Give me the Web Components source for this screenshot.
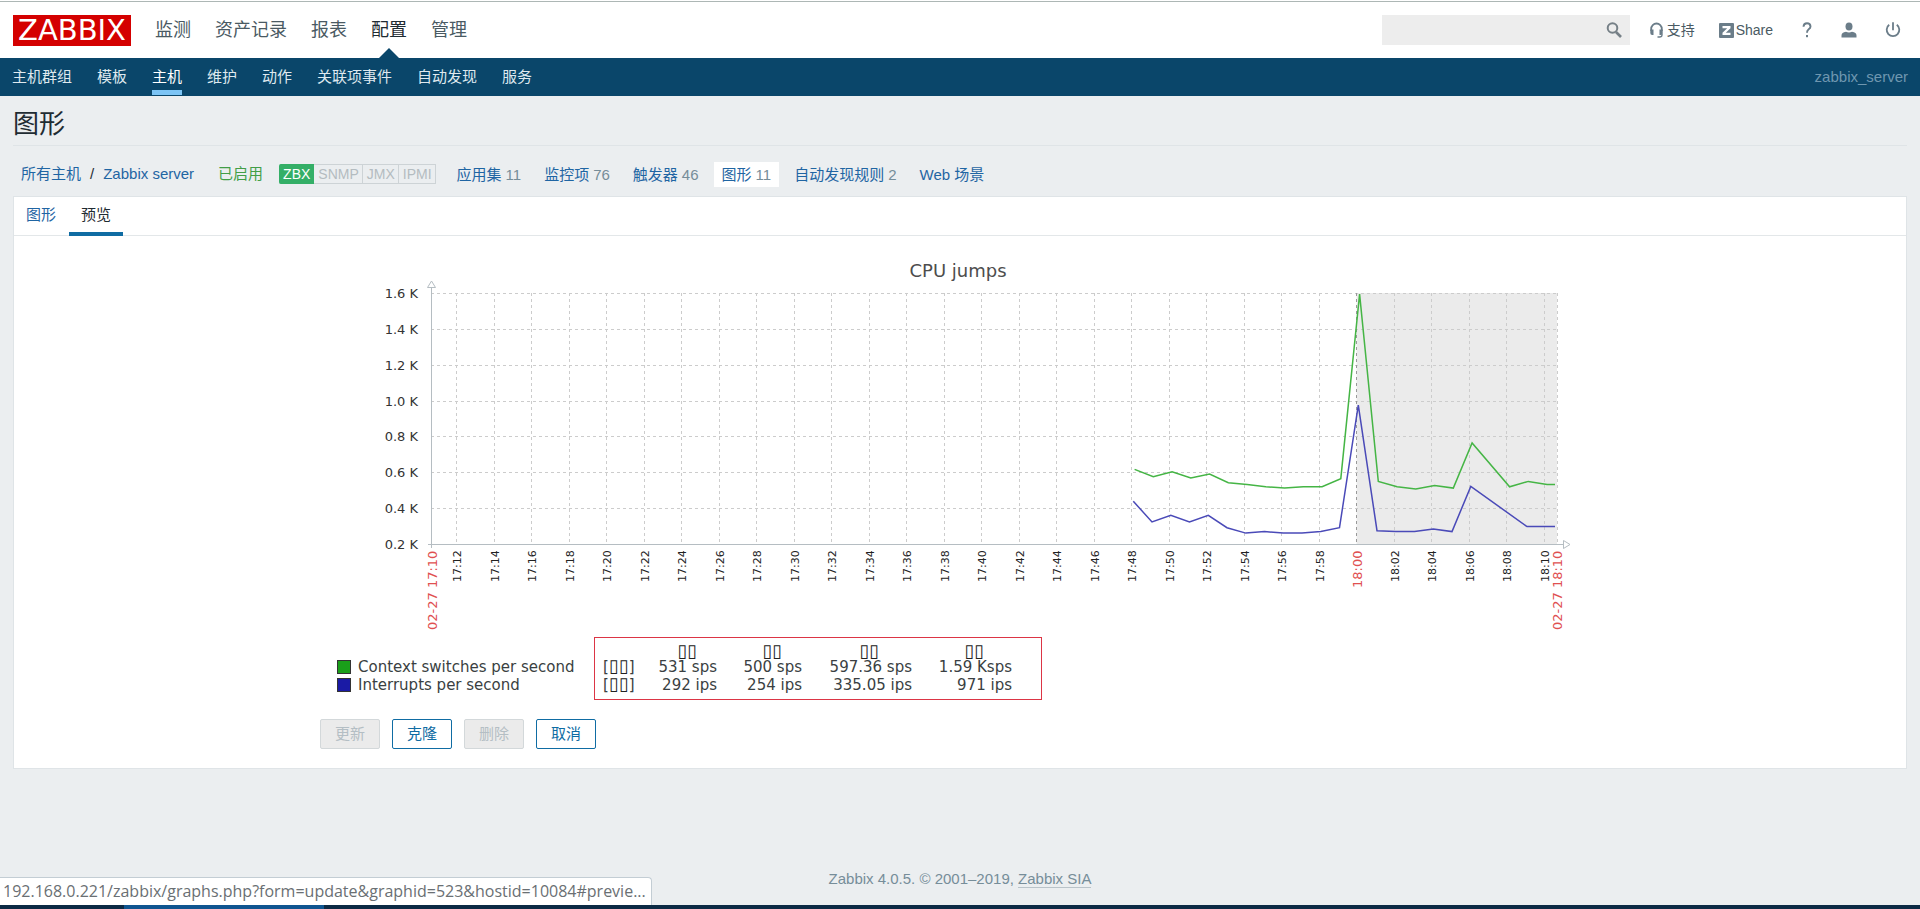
<!DOCTYPE html>
<html lang="zh-CN">
<head>
<meta charset="utf-8">
<title>Zabbix: 图形</title>
<style>
  html, body { margin: 0; }
  body {
    min-height: 100vh;
    background: #ebeef0;
    color: #1f2c33;
    font: 15px/20px "Liberation Sans", "Noto Sans CJK SC", sans-serif;
  }
</style>
</head>
<body>
<zbx-app></zbx-app>

<script>
const define = (name, html, setup) => {
  const tpl = document.createElement('template');
  tpl.innerHTML = html;
  customElements.define(name, class extends HTMLElement {
    constructor() {
      super();
      this.attachShadow({ mode: 'open' }).append(tpl.content.cloneNode(true));
    }
    connectedCallback() {
      if (setup && !this.ready) { this.ready = true; setup(this, this.shadowRoot); }
    }
  });
};

/* Top-level menu entry */
define('zbx-menu-item', `
<style>
  :host { display: flex; position: relative; height: 56px; }
  a { font-size: 18px; line-height: 56px; color: #4a5a63; text-decoration: none; }
  :host([selected]) a { color: #1f2c33; }
  :host([selected])::after {
    content: ""; position: absolute; left: 50%; bottom: 0; margin-left: -10px;
    border: 10px solid transparent; border-top: 0; border-bottom-color: #0a466a;
  }
</style>
<a href="#"><slot></slot></a>`);

define('zbx-header', `
<style>
  :host { display: flex; align-items: center; height: 56px; padding: 0 19px 0 13px; background: #fff; border-top: 1px solid #adb7b5; }
  .logo { width: 118px; height: 31px; background: #d40000; color: #fff; text-align: center; text-decoration: none;
          font: 29px/31px "DejaVu Sans", sans-serif; }
  nav { display: flex; gap: 24px; margin-left: 24px; flex: 1; }
  form { display: flex; align-items: center; width: 248px; height: 30px; background: #ededed; margin-right: 20px; }
  input { flex: 1; min-width: 0; border: 0; background: none; outline: 0; height: 30px; padding: 0 8px; box-sizing: border-box; font: inherit; }
  button { border: 0; background: none; padding: 0 8px 0 0; display: flex; }
  .tool { display: flex; align-items: center; font-size: 14px; color: #4a5a63; text-decoration: none; gap: 3px; }
  .tools { display: flex; align-items: center; height: 54px; }
  .support { margin-right: 24px; gap: 4px; }
  .share { margin-right: 28px; gap: 2px; }
  .help { margin-right: 28px; }
  .user { margin-right: 28px; }
  svg { display: block; }
</style>
<a class="logo" href="#">ZABBIX</a>
<nav><slot></slot></nav>
<div class="tools">
  <form role="search">
    <input type="text" aria-label="搜索">
    <button type="button" aria-label="搜索">
      <svg width="16" height="16" viewBox="0 0 16 16" fill="none" stroke="#768087"><circle cx="6.5" cy="6" r="4.8" stroke-width="2"/><path d="M10 10l5 5" stroke-width="2.6"/></svg>
    </button>
  </form>
  <a class="tool support" href="#">
    <svg width="13" height="16" viewBox="0 0 13 16"><path d="M1.2 9V6.8a5.3 5.3 0 0 1 10.6 0V9" fill="none" stroke="#6b7d89" stroke-width="1.8"/><path d="M.3 7.5h3.2V13H2.2Q.3 13 .3 11zM12.7 7.5H9.5V13h1.3Q12.7 13 12.7 11z" fill="#6b7d89"/><path d="M12 11.5v1.5q0 2-2.5 2H7.5" fill="none" stroke="#6b7d89" stroke-width="1.3"/></svg>支持</a>
  <a class="tool share" href="#">
    <svg width="15" height="15" viewBox="0 0 15 15"><rect width="15" height="15" rx="1" fill="#6b7d89"/><path d="M3.5 3h8v2.200L6.800 9.800h4.700V12h-8V9.800L8.200 5.200H3.500z" fill="#fff"/></svg>Share</a>
  <a class="tool help" href="#" aria-label="帮助">
    <svg width="12" height="16" viewBox="0 0 12 16"><path d="M2.5 4.7Q2.7 1.3 6 1.3T9.5 4.4Q9.5 6 7.7 7.3T6 10.8" fill="none" stroke="#6b7d89" stroke-width="1.9"/><rect x="5" y="13" width="2" height="2.2" fill="#6b7d89"/></svg></a>
  <a class="tool user" href="#" aria-label="用户">
    <svg width="16" height="16" viewBox="0 0 16 16" fill="#6b7d89"><ellipse cx="8" cy="4.5" rx="3.5" ry="4"/><path d="M.5 15.5v-2Q.5 10.500 5 9.800q3 1.300 6 0 4.500.700 4.500 3.700v2z"/></svg></a>
  <a class="tool" href="#" aria-label="退出">
    <svg width="16" height="16" viewBox="0 0 16 16" fill="none" stroke="#6b7d89" stroke-width="1.8"><path d="M4.2 2.8a6.3 6.3 0 1 0 7.6 0M8 .3v8"/></svg></a>
</div>`);

/* Second-level menu entry */
define('zbx-subitem', `
<style>
  :host { display: flex; }
  a { color: #dfe9ef; text-decoration: none; line-height: 37px; height: 32px; border-bottom: 5px solid transparent; }
  :host([selected]) a { color: #fff; border-color: #7cc4f5; }
</style>
<a href="#"><slot></slot></a>`);

define('zbx-subnav', `
<style>
  :host { display: flex; justify-content: space-between; height: 38px; padding: 0 12px; background: #0a466a; }
  nav { display: flex; gap: 25px; }
  .server { color: #6f97b0; line-height: 38px; }
</style>
<nav><slot></slot></nav><span class="server">zabbix_server</span>`);

/* Object link with an optional counter */
define('zbx-object', `
<style>
  :host { display: flex; padding: 2px 8px; line-height: 21px; }
  :host([selected]) { background: #fff; }
  a { color: #1f65a3; text-decoration: none; }
  span { color: #768d99; margin-left: 4px; }
</style>
<a href="#"><slot></slot></a>`, (host, root) => {
  if (!host.hasAttribute('count')) return;
  const s = document.createElement('span');
  s.textContent = host.getAttribute('count');
  root.append(s);
});

define('zbx-objects', `
<style>
  :host { display: flex; align-items: center; padding: 6px 0 0 8px; height: 44px; }
  a { color: #1f65a3; text-decoration: none; }
  .sep { margin: 0 9px; }
  .on { color: #429e47; margin: 0 16px 0 24px; }
  .ifs { display: flex; font-size: 14px; line-height: 18px; margin-right: 13px; color: #b4bcc0; }
  .ifs span { border: 1px solid #cdd3d6; border-left-width: 0; padding: 0 3px 0 4px; }
  .ifs .ok { background: #34af67; border-color: #34af67; color: #fff; border-radius: 2px 0 0 2px; }
  .list { display: flex; gap: 7px; }
</style>
<a href="#">所有主机</a><span class="sep">/</span><a href="#">Zabbix server</a>
<span class="on">已启用</span>
<div class="ifs"><span class="ok">ZBX</span><span>SNMP</span><span>JMX</span><span>IPMI</span></div>
<div class="list"><slot></slot></div>`);

define('zbx-tabs', `
<style>
  :host { display: block; height: 38px; border-bottom: 1px solid #e3e7e9; }
  div { display: flex; gap: 1px; }
  button { height: 39px; padding: 0 12px; border: 0; border-bottom: 4px solid transparent; background: none; color: #1f65a3; font: inherit; line-height: 35px; }
  button[aria-selected=true] { color: #1f2c33; border-color: #0f6ca3; }
</style>
<div role="tablist"><button role="tab" aria-selected="false">图形</button><button role="tab" aria-selected="true">预览</button></div>`);

define('zbx-chart', `
<style>
  :host { display: block; }
  svg { display: block; width: 100%; height: auto; font-family: "DejaVu Sans", sans-serif; }
</style>
<svg viewBox="0 0 1280 389" role="img" aria-label="CPU jumps"></svg>`, (host, root) => {
  const svg = root.querySelector('svg');
  const left = 111, right = 1237, top = 43, bottom = 294;
  const xAt = m => 136.6 + (m - 12) * 18.75;             // minutes after 17:00
  const yAt = k => bottom - (k - 0.2) * (bottom - top) / 1.4;
  let out = `<rect x="${xAt(60)}" y="${top}" width="${right - xAt(60)}" height="${bottom - top}" fill="#ebebeb"/>`;
  const grid = 'stroke="#ccc" stroke-dasharray="3 3"';
  out += `<text x="638" y="27" text-anchor="middle" font-size="18" fill="#4d4d4d">CPU jumps</text>`;
  for (let i = 0; i < 8; i++) {
    const v = 0.2 + i * 0.2, y = Math.round(yAt(v)) + 0.5;
    if (i) out += `<path d="M${left} ${y}H${right}" ${grid}/>`;
    out += `<text x="98" y="${y + 4}" text-anchor="end" font-size="13" fill="#333">${v.toFixed(1)} K</text>`;
  }
  const label = (x, y, size, color, t) =>
    `<text transform="translate(${x} ${y}) rotate(-90)" font-size="${size}" fill="${color}">${t}</text>`;
  for (let m = 12; m <= 70; m += 2) {
    const x = Math.floor(xAt(m)) + 0.5, hour = m === 60;
    const t = (m < 60 ? '17:' : '18:') + String(m % 60).padStart(2, '0');
    out += `<path d="M${x} ${top}V${bottom}" ${grid} ${hour ? 'style="stroke:#999"' : ''}/>`;
    out += hour ? label(x + 5, 338, 13, '#e05050', t) : label(x + 4, 332, 11, '#222', t);
  }
  out += `<path d="M${right + .5} ${top}V${bottom}" ${grid}/>`;
  out += label(117, 380, 13, '#e05050', '02-27 17:10') + label(1242, 380, 13, '#e05050', '02-27 18:10');
  out += `<path d="M111.5 298V37M108 294.5H1243" stroke="#b5bdc2" fill="none"/>
    <path d="M107.5 37.5L111.5 31L115.5 37.5zM1243.5 290.5L1250 294.5L1243.5 298.5z" fill="#fff" stroke="#b5bdc2"/>`;
  const green = [.616,.575,.603,.568,.59,.542,.532,.519,.512,.519,.519,.564,1.594,.549,.519,.506,.527,.512,.764,null,.519,.549,.532];
  const blue = [.438,.323,.36,.323,.36,.291,.261,.269,.261,.261,.269,.291,.974,.274,.269,.269,.284,.269,.521,null,null,.297,.297];
  const line = (data, first, color) => {
    const pts = data.map((v, i) => v === null ? '' : `${xAt(first + i).toFixed(1)},${yAt(v).toFixed(1)}`).filter(Boolean);
    pts.push(`1235,${yAt(data[data.length - 1]).toFixed(1)}`);
    return `<polyline points="${pts.join(' ')}" fill="none" stroke="${color}" stroke-width="1.5"/>`;
  };
  out += line(green, 48.16, '#45b545') + line(blue, 48.09, '#4a4ab8');
  svg.innerHTML = out;
});

define('zbx-legend', `
<style>
  :host { display: flex; margin: 0 0 0 17px; font: 15px/18px "DejaVu Sans", sans-serif; color: #3a3f42; }
  div { position: relative; padding-top: 4px; }
  div::after { content: ""; position: absolute; left: 257px; right: 1px; top: -2px; bottom: -6px; border: 1px solid #dc3545; }
  table { border-collapse: collapse; table-layout: fixed; width: 706px; }
  th, td { padding: 0; font-weight: normal; text-align: right; white-space: nowrap; height: 18px; }
  thead th { height: 15px; line-height: 15px; font-size: 18px; }
  thead th, b { color: #222; }
  .name { width: 266px; text-align: left; }
  .fn { width: 28px; text-align: left; }
  b { font-weight: normal; font-size: 18px; line-height: 15px; }
  .a { width: 86px; } .b { width: 85px; } .c { width: 110px; } .d { width: 100px; }
  .a, .b, .c, .d { padding-right: 20px; box-sizing: border-box; }
  .c { padding-right: 33px; } .d { padding-right: 28px; }
  i { display: inline-block; width: 12px; height: 12px; border: 1px solid #333; vertical-align: -2px; margin-right: 7px; }
  .g { background: #1a9f1a; } .u { background: #1a1aa5; }
</style>
<div><table>
  <thead><tr><th class="name"></th><th class="fn"></th><th class="a">▯▯</th><th class="b">▯▯</th><th class="c">▯▯</th><th class="d">▯▯</th><th></th></tr></thead>
  <tbody>
    <tr><th class="name"><i class="g"></i>Context switches per second</th><td class="fn">[<b>▯▯</b>]</td><td>531 sps</td><td>500 sps</td><td>597.36 sps</td><td>1.59 Ksps</td><td></td></tr>
    <tr><th class="name"><i class="u"></i>Interrupts per second</th><td class="fn">[<b>▯▯</b>]</td><td>292 ips</td><td>254 ips</td><td>335.05 ips</td><td>971 ips</td><td></td></tr>
  </tbody>
</table></div>`);

define('zbx-button', `
<style>
  :host { display: block; }
  button { width: 60px; height: 30px; box-sizing: border-box; padding: 0; border: 1px solid #0f6ca3; border-radius: 2px; background: #fff; color: #0f6ca3; font: inherit; line-height: 28px; }
  button:disabled { background: #ebebeb; border-color: #d3d8da; color: #b4bec4; }
</style>
<button type="button"><slot></slot></button>`, (host, root) => {
  root.querySelector('button').disabled = host.hasAttribute('disabled');
});

define('zbx-panel', `
<style>
  :host { display: block; background: #fff; border: 1px solid #dfe4e7; }
  .body { max-width: 1280px; margin: 0 auto; padding: 14px 0 19px; }
  .actions { display: flex; gap: 12px; margin-top: 25px; }
</style>
<zbx-tabs></zbx-tabs>
<div class="body">
  <zbx-chart></zbx-chart>
  <zbx-legend></zbx-legend>
  <div class="actions"><slot></slot></div>
</div>`);

define('zbx-footer', `
<style>
  :host { display: block; text-align: center; color: #768d99; margin-top: 100px; }
  a { color: inherit; text-decoration: none; border-bottom: 1px solid #b9c3c9; }
</style>
<footer>Zabbix 4.0.5. © 2001–2019, <a href="#">Zabbix SIA</a></footer>`);

/* Browser link preview and the strip of the taskbar beneath it */
define('zbx-status', `
<style>
  :host { display: block; position: fixed; left: 0; right: 0; bottom: 0; }
  .url { display: table; background: #fff; border: 1px solid #c3cdd4; border-width: 1px 1px 0 0; border-radius: 0 4px 0 0;
         padding: 0 5px 0 3px; font: 16px/27px "Open Sans", sans-serif; color: #6a6f73; }
  .bar { height: 4px; background: #0c2a44; padding-left: 124px; }
  .bar::before { content: ""; display: block; width: 200px; height: 4px; background: #0f5590; }
</style>
<div class="url">192.168.0.221/zabbix/graphs.php?form=update&amp;graphid=523&amp;hostid=10084#previe...</div>
<div class="bar"></div>`);

define('zbx-app', `
<style>
  :host { display: block; background: #fff; padding-top: 1px; }
  main { background: #ebeef0; padding: 0 13px; }
  h1 { margin: 0; font-size: 26px; font-weight: normal; height: 49px; line-height: 57px; border-bottom: 1px solid #dfe4e7; }
</style>
<zbx-header>
  <zbx-menu-item>监测</zbx-menu-item><zbx-menu-item>资产记录</zbx-menu-item><zbx-menu-item>报表</zbx-menu-item><zbx-menu-item selected>配置</zbx-menu-item><zbx-menu-item>管理</zbx-menu-item>
</zbx-header>
<zbx-subnav>
  <zbx-subitem>主机群组</zbx-subitem><zbx-subitem>模板</zbx-subitem><zbx-subitem selected>主机</zbx-subitem><zbx-subitem>维护</zbx-subitem><zbx-subitem>动作</zbx-subitem><zbx-subitem>关联项事件</zbx-subitem><zbx-subitem>自动发现</zbx-subitem><zbx-subitem>服务</zbx-subitem>
</zbx-subnav>
<main>
  <h1>图形</h1>
  <zbx-objects>
    <zbx-object count="11">应用集</zbx-object><zbx-object count="76">监控项</zbx-object><zbx-object count="46">触发器</zbx-object><zbx-object count="11" selected>图形</zbx-object><zbx-object count="2">自动发现规则</zbx-object><zbx-object>Web 场景</zbx-object>
  </zbx-objects>
  <zbx-panel>
    <zbx-button disabled>更新</zbx-button><zbx-button>克隆</zbx-button><zbx-button disabled>删除</zbx-button><zbx-button>取消</zbx-button>
  </zbx-panel>
  <zbx-footer></zbx-footer>
</main>
<zbx-status></zbx-status>`);
</script>
</body>
</html>
